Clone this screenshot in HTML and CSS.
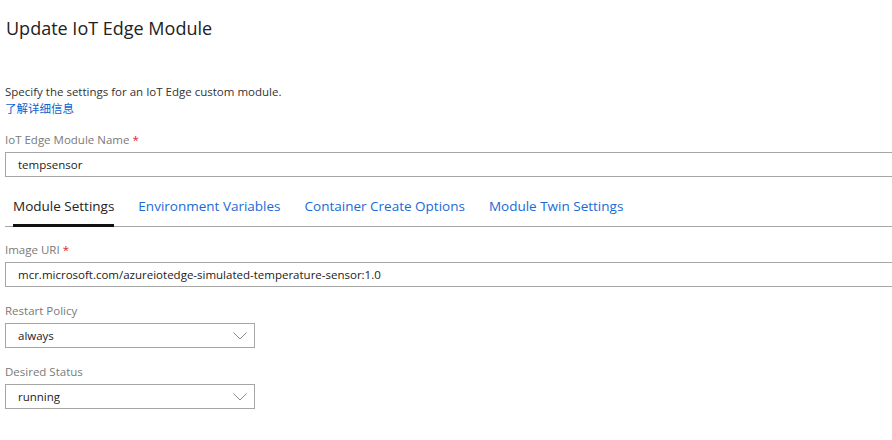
FILE: index.html
```html
<!DOCTYPE html>
<html>
<head>
<meta charset="utf-8">
<link rel="stylesheet" href="styles.css">
</head>
<body>
<div class="page">
  <h1 class="title">Update IoT Edge Module</h1>
  <p class="desc">Specify the settings for an IoT Edge custom module.<br><a class="link" href="#">了解详细信息</a></p>
  <div class="field first">
    <div class="label">IoT Edge Module Name <span class="req">*</span></div>
    <div class="input wide">tempsensor</div>
  </div>
  <div class="tabs">
    <div class="tab active">Module Settings</div>
    <div class="tab">Environment Variables</div>
    <div class="tab">Container Create Options</div>
    <div class="tab">Module Twin Settings</div>
  </div>
  <div class="field after-tabs">
    <div class="label">Image URI <span class="req">*</span></div>
    <div class="input wide">mcr.microsoft.com/azureiotedge-simulated-temperature-sensor:1.0</div>
  </div>
  <div class="field">
    <div class="label">Restart Policy</div>
    <div class="input select"><span>always</span><svg class="chev" width="14" height="8" viewBox="0 0 14 8"><path d="M0.5 0.5 L7 7 L13.5 0.5" fill="none" stroke="#8a8a8a" stroke-width="1"/></svg></div>
  </div>
  <div class="field">
    <div class="label">Desired Status</div>
    <div class="input select"><span>running</span><svg class="chev" width="14" height="8" viewBox="0 0 14 8"><path d="M0.5 0.5 L7 7 L13.5 0.5" fill="none" stroke="#8a8a8a" stroke-width="1"/></svg></div>
  </div>
</div>
</body>
</html>
```
FILE: styles.css
```css
html, body {
  margin: 0;
  padding: 0;
  background: #fff;
  overflow: hidden;
}
.page {
  font-family: "Open Sans", "Noto Sans CJK SC", sans-serif;
  color: #333;
  padding: 0 0 0 5px;
  width: 887px;
}
.title {
  margin: 0;
  padding-top: 15px;
  font-size: 18px;
  font-weight: 400;
  line-height: 26px;
  color: #222;
  padding-left: 1px;
}
.desc {
  margin: 43px 0 0 0;
  font-size: 11.5px;
  line-height: 16px;
  color: #333;
}
.link {
  color: #0a63d0;
  text-decoration: none;
  font-family: "Noto Sans CJK SC", sans-serif;
}
.field {
  margin-top: 16px;
}
.field.first {
  margin-top: 15px;
}
.field.after-tabs {
  margin-top: 15px;
}
.label {
  font-size: 11.5px;
  line-height: 16px;
  color: #7a7a7a;
  height: 17px;
}
.req {
  color: #e0202f;
}
.input {
  box-sizing: border-box;
  height: 25px;
  border: 1px solid #a6a6a6;
  margin-top: 3px;
  padding-left: 12px;
  font-size: 11.5px;
  line-height: 23px;
  color: #222;
}
.input.wide {
  border-right: none;
  width: 890px;
}
.select {
  width: 250px;
  display: flex;
  align-items: center;
  justify-content: space-between;
  padding-right: 7px;
}
.chev {
  display: block;
}
.tabs {
  display: flex;
  margin-top: 0;
  border-bottom: 1px solid #a6a6a6;
  padding-left: 8px;
  height: 50px;
  box-sizing: border-box;
  gap: 24px;
}
.tab {
  font-size: 13.5px;
  line-height: 20px;
  padding-top: 19px;
  color: #1a6ad6;
  box-sizing: border-box;
  height: 49px;
}
.tab.active {
  color: #222;
  border-bottom: 3px solid #111;
  margin-bottom: -1px;
  height: 50px;
}
```
